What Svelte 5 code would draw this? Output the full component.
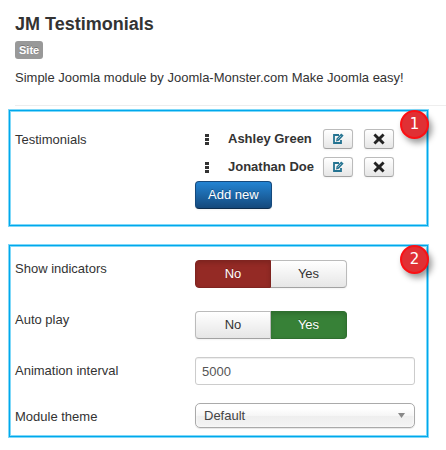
<script>
    let testimonials = $state(["Ashley Green", "Jonathan Doe"]);
    let indicators = $state("No");
    let autoplay = $state("Yes");
    let interval = $state("5000");
    let theme = $state("Default");

    function addNew() {
        testimonials.push("New testimonial");
    }

    function remove(index) {
        testimonials.splice(index, 1);
    }
</script>

<main>
    <header>
        <h1>JM Testimonials</h1>
        <span class="label">Site</span>
        <p>Simple Joomla module by Joomla-Monster.com Make Joomla easy!</p>
    </header>

    <section class="box items">
        <span class="badge">1</span>
        <div class="row">
            <span class="name">Testimonials</span>
            <div>
                <ul>
                    {#each testimonials as item, i}
                        <li>
                            <svg class="handle" viewBox="0 0 4 11" aria-hidden="true">
                                <path d="M0 0h4v3H0zM0 4h4v3H0zM0 8h4v3H0z" fill="currentColor" />
                            </svg>
                            <strong>{item}</strong>
                            <button class="btn small" aria-label="Edit {item}">
                                <svg class="edit" viewBox="0 0 12 12">
                                    <path d="M7 2H2v8h7V7" fill="none" stroke="currentColor" stroke-width="1.8" />
                                    <path d="M4 8.4l.6-3L9.2.4l2.4 2.2L6.8 7.8z" fill="currentColor" />
                                    <path d="M5.6 6.4l3.6-3.6" stroke="#fff" stroke-width=".5" />
                                </svg>
                            </button>
                            <button class="btn small" aria-label="Remove {item}" onclick={() => remove(i)}>
                                <svg class="cross" viewBox="0 0 12 12">
                                    <path d="M2.4.6L6 4.1 9.6.6l2 2L8.1 6l3.5 3.4-2 2L6 7.9l-3.6 3.5-2-2L3.9 6 .4 2.6z" fill="currentColor" />
                                </svg>
                            </button>
                        </li>
                    {/each}
                </ul>
                <button class="btn primary" onclick={addNew}>Add new</button>
            </div>
        </div>
    </section>

    <section class="box options">
        <span class="badge">2</span>
        <div class="row" role="radiogroup" aria-labelledby="indicators">
            <span class="name" id="indicators">Show indicators</span>
            <div class="group">
                {#each ["No", "Yes"] as value}
                    <label class="btn {value.toLowerCase()}">
                        <input type="radio" name="indicators" {value} bind:group={indicators} />
                        {value}
                    </label>
                {/each}
            </div>
        </div>
        <div class="row" role="radiogroup" aria-labelledby="autoplay">
            <span class="name" id="autoplay">Auto play</span>
            <div class="group">
                {#each ["No", "Yes"] as value}
                    <label class="btn {value.toLowerCase()}">
                        <input type="radio" name="autoplay" {value} bind:group={autoplay} />
                        {value}
                    </label>
                {/each}
            </div>
        </div>
        <div class="row">
            <label class="name" for="interval">Animation interval</label>
            <input class="text" id="interval" type="text" bind:value={interval} />
        </div>
        <div class="row">
            <label class="name" for="theme">Module theme</label>
            <div class="select">
                <select id="theme" bind:value={theme}>
                    <option>Default</option>
                </select>
                <svg class="arrow" viewBox="0 0 7 5" aria-hidden="true">
                    <path d="M0 0h7L3.5 5z" fill="#888" />
                </svg>
            </div>
        </div>
    </section>
</main>

<style>
    :global(body) {
        margin: 0;
        background: #fff;
    }
    main {
        padding: 14px 0 12px 8px;
        color: #333;
        font-family: "Liberation Sans", Arial, sans-serif;
        font-size: 13px;
        line-height: 18px;
    }
    header {
        margin-left: 7px;
        padding-bottom: 18px;
        border-bottom: 1px solid #eee;
    }
    h1 {
        margin: 0 0 7px;
        font-size: 18px;
        line-height: 20px;
    }
    .label {
        display: block;
        box-sizing: border-box;
        width: fit-content;
        padding: 2px 4px;
        border-radius: 3px;
        background: #999;
        color: #fff;
        font-size: 11px;
        font-weight: bold;
        line-height: 14px;
        text-shadow: 0 -1px 0 rgba(0, 0, 0, 0.25);
    }
    p {
        margin: 10px 0 0;
    }
    .box {
        position: relative;
        margin-right: 17px;
        padding-left: 6px;
        padding-right: 13px;
        border: 1px solid #80d8f8;
        box-shadow: inset 0 0 0 1px #00a8ec, inset 0 0 0 2px #80d8f8;
    }
    .items {
        margin-top: 3px;
        padding-top: 16px;
        padding-bottom: 17px;
    }
    .options {
        display: grid;
        gap: 18px;
        margin-top: 17px;
        padding-top: 10px;
        padding-bottom: 9px;
    }
    .badge {
        position: absolute;
        top: 0;
        right: -1px;
        box-sizing: border-box;
        width: 29px;
        height: 29px;
        border: 2px solid #fb1014;
        border-radius: 50%;
        background: #e03034;
        box-shadow: 3px 4px 6px rgba(0, 0, 0, 0.4);
        color: #fff;
        font-family: "DejaVu Sans", sans-serif;
        font-size: 15px;
        line-height: 25px;
        text-align: center;
    }
    .row {
        display: grid;
        grid-template-columns: 180px minmax(0, 1fr);
    }
    .name {
        align-self: start;
        padding-top: 5px;
    }
    ul {
        display: grid;
        grid-template-columns: 4px max-content 30px 30px;
        row-gap: 8px;
        margin: 3px 0 4px;
        padding: 0 0 0 10px;
        list-style: none;
    }
    li {
        display: grid;
        grid-column: 1 / -1;
        grid-template-columns: subgrid;
        align-items: center;
    }
    li strong {
        padding: 0 9px 0 19px;
    }
    li .btn + .btn {
        margin-left: 11px;
    }
    svg {
        display: block;
    }
    .handle {
        width: 4px;
        height: 11px;
    }
    .edit {
        width: 12px;
        height: 12px;
        color: #247391;
    }
    .cross {
        width: 12px;
        height: 12px;
        color: #222;
    }
    .btn {
        display: block;
        box-sizing: border-box;
        height: 28px;
        padding: 4px 12px;
        border: 1px solid #bbb;
        border-bottom-color: #a2a2a2;
        border-radius: 4px;
        background: linear-gradient(#fff, #e6e6e6);
        box-shadow: 0 1px 2px rgba(0, 0, 0, 0.05);
        color: #333;
        font-family: inherit;
        font-size: 13px;
        line-height: 18px;
        text-align: center;
        cursor: pointer;
    }
    .small {
        width: 30px;
        height: 20px;
        padding: 2px 8px;
        border-radius: 3px;
    }
    .primary {
        border-color: #15497c;
        border-bottom-color: #0d2d4d;
        background: linear-gradient(#2384d3, #15497c);
        color: #fff;
        text-shadow: 0 -1px 0 rgba(0, 0, 0, 0.25);
    }
    .group {
        display: flex;
        padding-top: 5px;
    }
    .group .btn {
        width: 76px;
    }
    .group .btn:first-child {
        border-radius: 4px 0 0 4px;
    }
    .group .btn:last-child {
        border-left-width: 0;
        border-radius: 0 4px 4px 0;
    }
    .group input {
        position: absolute;
        opacity: 0;
        pointer-events: none;
    }
    .group .btn:has(input:checked) {
        color: #fff;
        box-shadow: inset 0 2px 4px rgba(0, 0, 0, 0.15);
        text-shadow: 0 -1px 0 rgba(0, 0, 0, 0.25);
    }
    .group .no:has(input:checked) {
        border-color: #802420;
        background: #942a25;
    }
    .group .yes:has(input:checked) {
        border-color: #2f6f2f;
        background: #378137;
    }
    .text {
        box-sizing: border-box;
        width: 100%;
        height: 28px;
        padding: 4px 6px;
        border: 1px solid #ccc;
        border-radius: 3px;
        box-shadow: inset 0 1px 1px rgba(0, 0, 0, 0.075);
        color: #555;
        font-family: inherit;
        font-size: 13px;
        line-height: 18px;
    }
    .select {
        position: relative;
    }
    select {
        display: block;
        box-sizing: border-box;
        width: 100%;
        height: 25px;
        padding: 0 24px 0 8px;
        appearance: none;
        border: 1px solid #aaa;
        border-radius: 5px;
        background: linear-gradient(#fff 20%, #f6f6f6 50%, #eee 52%, #f4f4f4 100%);
        box-shadow: inset 0 0 3px #fff, 0 1px 1px rgba(0, 0, 0, 0.1);
        color: #444;
        font-family: inherit;
        font-size: 13px;
    }
    .arrow {
        position: absolute;
        top: 10px;
        right: 10px;
        width: 7px;
        height: 5px;
        pointer-events: none;
    }
</style>
